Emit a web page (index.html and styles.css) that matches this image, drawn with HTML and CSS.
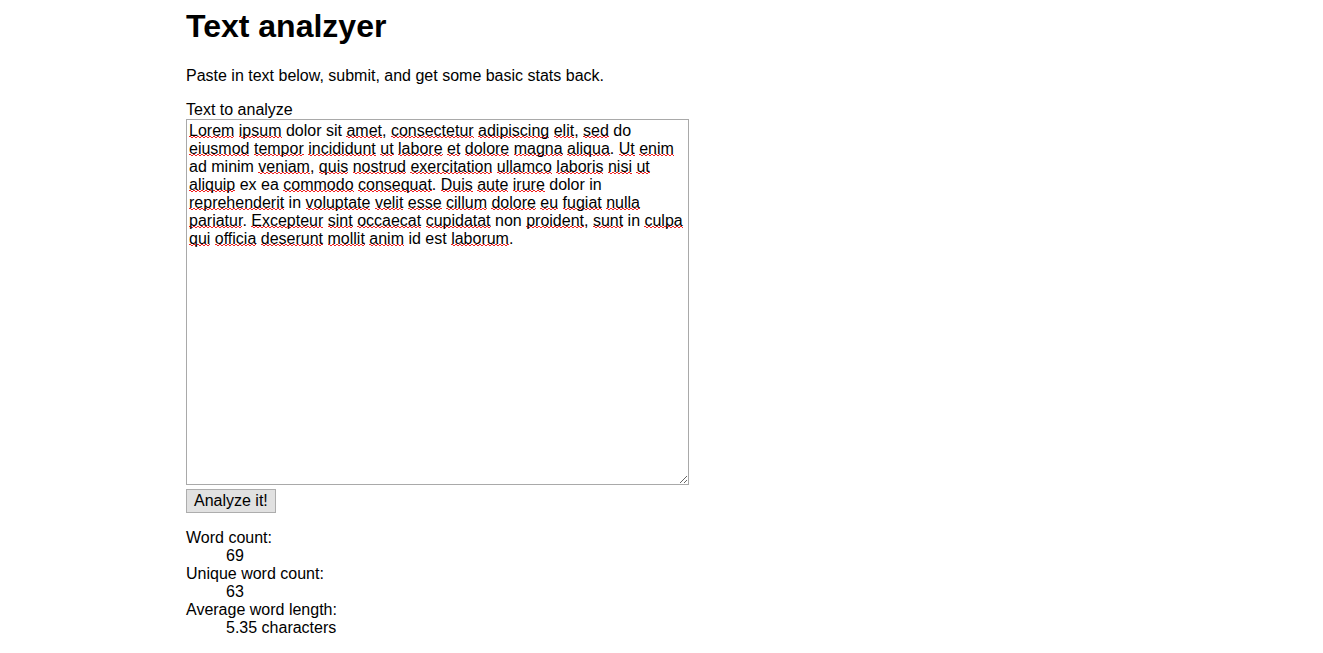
FILE: index.html
```html
<!DOCTYPE html>
<html lang="en">
<head>
<meta charset="utf-8">
<title>Text analzyer</title>
<link rel="stylesheet" href="styles.css">
</head>
<body>
<main class="page">
  <h1 class="title">Text analzyer</h1>
  <p class="intro">Paste in text below, submit, and get some basic stats back.</p>
  <form class="form">
    <label class="label" for="text">Text to analyze</label>
    <div class="textbox" id="text" role="textbox" aria-multiline="true" contenteditable="true" spellcheck="false"><span class="sp">Lorem</span> <span class="sp">ipsum</span> dolor sit <span class="sp">amet</span>, <span class="sp">consectetur</span> <span class="sp">adipiscing</span> <span class="sp">elit</span>, <span class="sp">sed</span> do <span class="sp">eiusmod</span> <span class="sp">tempor</span> <span class="sp">incididunt</span> <span class="sp">ut</span> <span class="sp">labore</span> <span class="sp">et</span> <span class="sp">dolore</span> <span class="sp">magna</span> <span class="sp">aliqua</span>. <span class="sp">Ut</span> <span class="sp">enim</span> ad minim <span class="sp">veniam</span>, <span class="sp">quis</span> <span class="sp">nostrud</span> <span class="sp">exercitation</span> <span class="sp">ullamco</span> <span class="sp">laboris</span> <span class="sp">nisi</span> <span class="sp">ut</span> <span class="sp">aliquip</span> ex ea <span class="sp">commodo</span> <span class="sp">consequat</span>. <span class="sp">Duis</span> <span class="sp">aute</span> <span class="sp">irure</span> dolor in <span class="sp">reprehenderit</span> in <span class="sp">voluptate</span> <span class="sp">velit</span> <span class="sp">esse</span> <span class="sp">cillum</span> <span class="sp">dolore</span> <span class="sp">eu</span> <span class="sp">fugiat</span> <span class="sp">nulla</span> <span class="sp">pariatur</span>. <span class="sp">Excepteur</span> <span class="sp">sint</span> <span class="sp">occaecat</span> <span class="sp">cupidatat</span> non <span class="sp">proident</span>, <span class="sp">sunt</span> in <span class="sp">culpa</span> <span class="sp">qui</span> <span class="sp">officia</span> <span class="sp">deserunt</span> <span class="sp">mollit</span> <span class="sp">anim</span> id est <span class="sp">laborum</span>.</div>
    <button class="btn" type="button">Analyze it!</button>
  </form>
  <dl class="stats">
    <dt>Word count:</dt>
    <dd>69</dd>
    <dt>Unique word count:</dt>
    <dd>63</dd>
    <dt>Average word length:</dt>
    <dd>5.35 characters</dd>
  </dl>
</main>
</body>
</html>
```

FILE: styles.css
```css
html, body {
  margin: 0;
  padding: 0;
  background: #ffffff;
}

body {
  padding: 8px;
  font-family: "Liberation Sans", Arial, sans-serif;
  font-size: 16px;
  line-height: 18px;
  color: #000000;
}

.page {
  max-width: 951px;
  margin: 0 auto;
}

.title {
  margin: 0 0 22px 0;
  font-size: 32px;
  line-height: 37px;
  font-weight: bold;
}

.intro {
  margin: 0 0 16px 0;
}

.form {
  display: flex;
  flex-direction: column;
  align-items: flex-start;
}

.label {
  display: block;
  line-height: 18px;
  height: 18px;
}

.textbox {
  box-sizing: border-box;
  width: 503px;
  height: 366px;
  padding: 2px;
  border: 1px solid #a9a9a9;
  font-family: "Liberation Sans", Arial, sans-serif;
  font-size: 16px;
  line-height: 18px;
  color: #000000;
  background: #ffffff;
  overflow: auto;
  resize: both;
  outline: none;
  word-wrap: break-word;
}

.sp {
  background-image:
    linear-gradient(45deg, transparent 38%, #f02020 38%, #f02020 62%, transparent 62%),
    linear-gradient(-45deg, transparent 38%, #f02020 38%, #f02020 62%, transparent 62%);
  background-size: 4px 2px, 4px 2px;
  background-position: 0 calc(100% - 1px), 2px calc(100% - 1px);
  background-repeat: repeat-x;
}

.btn {
  margin-top: 4px;
  box-sizing: border-box;
  height: 24px;
  padding: 0 7px;
  font-family: "Liberation Sans", Arial, sans-serif;
  font-size: 16px;
  line-height: 18px;
  color: #000000;
  background: #e1e1e1;
  border: 1px solid #adadad;
  border-radius: 0;
}

.stats {
  margin: 16px 0 0 0;
}

.stats dt {
  margin: 0;
}

.stats dd {
  margin: 0 0 0 40px;
}
```
